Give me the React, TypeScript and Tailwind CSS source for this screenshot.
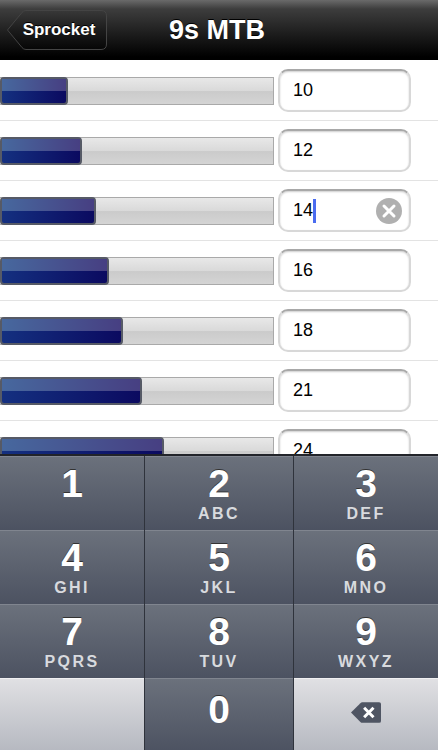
import React from 'react';

const sprockets = [
  { value: '10', fill: 68 },
  { value: '12', fill: 82 },
  { value: '14', fill: 96, active: true },
  { value: '16', fill: 109 },
  { value: '18', fill: 123 },
  { value: '21', fill: 142 },
  { value: '24', fill: 164 },
];

const keyRows = [
  [
    { digit: '1', letters: '' },
    { digit: '2', letters: 'ABC' },
    { digit: '3', letters: 'DEF' },
  ],
  [
    { digit: '4', letters: 'GHI' },
    { digit: '5', letters: 'JKL' },
    { digit: '6', letters: 'MNO' },
  ],
  [
    { digit: '7', letters: 'PQRS' },
    { digit: '8', letters: 'TUV' },
    { digit: '9', letters: 'WXYZ' },
  ],
];

const BackButton = () => (
  <button className="relative ml-[7px] flex h-[40px] w-[100px] items-center justify-center pl-[4px]">
    <svg className="absolute inset-0" width="100" height="40" viewBox="0 0 100 40">
      <defs>
        <linearGradient id="backFill" x1="0" y1="0" x2="0" y2="1">
          <stop offset="0" stopColor="#383838" />
          <stop offset="0.5" stopColor="#1c1c1c" />
          <stop offset="1" stopColor="#060606" />
        </linearGradient>
      </defs>
      <path
        d="M0.5 20 L15 2.5 Q16.5 0.5 19 0.5 L94 0.5 Q99.5 0.5 99.5 6 L99.5 34 Q99.5 39.5 94 39.5 L19 39.5 Q16.5 39.5 15 37.5 Z"
        fill="url(#backFill)"
        stroke="#444"
      />
    </svg>
    <span className="relative text-[17px] font-bold text-white [text-shadow:0_-1px_0_#000]">Sprocket</span>
  </button>
);

const Row = ({ value, fill, active }: { value: string; fill: number; active?: boolean }) => (
  <div className="flex h-[60px] shrink-0 items-center border-b border-[#e3e3e3] bg-white">
    <div className="h-[28px] w-[274px] border-y border-r border-[#a9a9a9] bg-[linear-gradient(#e8e8e8_0%,#d9d9d9_50%,#cbcbcb_52%,#d4d4d4_100%)]">
      <div
        className="-my-px h-[28px] rounded-[4px] border-2 border-[#565a66] bg-[linear-gradient(90deg,#143080,#0b0a60)]"
        style={{ width: fill }}
      >
        <div className="h-1/2 bg-[linear-gradient(90deg,#47689e,#473f82)]" />
      </div>
    </div>
    <div className="ml-[4px] flex h-[43px] w-[133px] items-center rounded-[10px] border-2 border-[#d8d8d8] border-t-[#a8a8a8] bg-white pl-[13px] pr-[7px] shadow-[inset_0_1px_2px_rgba(0,0,0,0.2)]">
      <span className="text-[18px] text-black">{value}</span>
      {active && <span className="h-[24px] w-[3px] bg-[#4a6cf0]" />}
      {active && (
        <svg className="ml-auto" width="26" height="26" viewBox="0 0 26 26">
          <circle cx="13" cy="13" r="13" fill="#b0b0b0" />
          <path d="M8 8 L18 18 M18 8 L8 18" stroke="#fff" strokeWidth="3" strokeLinecap="round" />
        </svg>
      )}
    </div>
  </div>
);

const Key = ({ digit, letters }: { digit: string; letters?: string }) => (
  <button className={`flex flex-col items-center border-t border-[#80858f] bg-[linear-gradient(#6b717c,#4c5261)] text-white ${digit === '0' ? 'pt-[10px]' : 'pt-[6px]'}`}>
    <span className="text-[39px] leading-[42px] font-bold [text-shadow:0_-1px_0_#333]">{digit}</span>
    {letters && (
      <span className="text-[16px] leading-[18px] font-bold tracking-[0.15em] text-[#d8dade]">
        {letters}
      </span>
    )}
  </button>
);

const GreyKey = ({ children }: { children?: React.ReactNode }) => (
  <div className="flex items-center justify-center border-t border-[#f0f0f2] bg-[linear-gradient(#e0e0e3,#b5b8c0)]">
    {children}
  </div>
);

export default function App() {
  return (
    <div className="flex h-[750px] w-[438px] flex-col overflow-hidden bg-white font-['Liberation_Sans',Arial,sans-serif]">
      <header className="flex h-[60px] shrink-0 items-center bg-[linear-gradient(#6a6a6a_0%,#3d3d3d_15%,#1e1e1e_55%,#000_95%)]">
        <BackButton />
        <h1 className="ml-[62px] text-[27px] font-bold text-white [text-shadow:0_-1px_0_#000]">9s MTB</h1>
      </header>

      <div className="flex min-h-0 flex-1 flex-col overflow-hidden pt-px">
        {sprockets.map((s) => (
          <Row key={s.value} value={s.value} fill={s.fill} active={s.active} />
        ))}
      </div>

      <div className="grid h-[296px] shrink-0 grid-cols-[144px_148px_144px] grid-rows-[74px_74px_74px_74px] gap-x-px border-t-2 border-[#22242a] bg-[#2f333c]">
        {keyRows.flat().map((k) => (
          <Key key={k.digit} digit={k.digit} letters={k.letters} />
        ))}
        <GreyKey />
        <Key digit="0" />
        <GreyKey>
          <svg className="mb-[7px]" width="30" height="21" viewBox="0 0 32 22">
            <path d="M0 11 L10 1 Q11 0 12 0 L30 0 Q32 0 32 2 L32 20 Q32 22 30 22 L12 22 Q11 22 10 21 Z" fill="#4f5563" />
            <path d="M14 6 L24 16 M24 6 L14 16" stroke="#fff" strokeWidth="3.2" />
          </svg>
        </GreyKey>
      </div>
    </div>
  );
}
